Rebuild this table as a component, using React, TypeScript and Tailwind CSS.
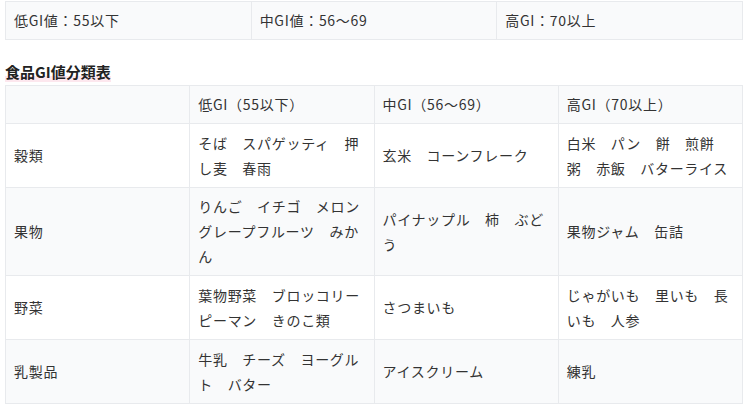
const ranges = ['低GI値：55以下', '中GI値：56〜69', '高GI：70以上'];

const head = ['', '低GI（55以下）', '中GI（56〜69）', '高GI（70以上）'];

const rows = [
  ['穀類', 'そば　スパゲッティ　押し麦　春雨', '玄米　コーンフレーク', '白米　パン　餅　煎餅　粥　赤飯　バターライス'],
  ['果物', 'りんご　イチゴ　メロン　グレープフルーツ　みかん', 'パイナップル　柿　ぶどう', '果物ジャム　缶詰'],
  ['野菜', '葉物野菜　ブロッコリー　ピーマン　きのこ類', 'さつまいも', 'じゃがいも　里いも　長いも　人参'],
  ['乳製品', '牛乳　チーズ　ヨーグルト　バター', 'アイスクリーム', '練乳'],
];

const cell = 'border border-[#e8eaed] px-[8px] py-[6px] align-middle text-left font-normal';

export default function App() {
  return (
    <div className="w-[743px] h-[408px] overflow-hidden bg-white pl-[5px] pt-[1px] text-[14px] leading-[25px] tracking-[0.05em] text-[#333] font-['Noto_Sans_CJK_JP','Noto_Sans',sans-serif]">
      <table className="w-[738px] table-fixed border-collapse">
        <tbody>
          <tr className="bg-[#f9fafb]">
            {ranges.map((r) => (
              <td key={r} className={cell}>
                {r}
              </td>
            ))}
          </tr>
        </tbody>
      </table>

      <h3 className="mt-[21px] h-[24px] text-[15px] leading-[22px] font-bold tracking-normal text-[#222]">
        <span className="bg-[linear-gradient(transparent_72%,#fde7ee_72%)]">食品GI値分類表</span>
      </h3>

      <table className="w-[738px] table-fixed border-collapse">
        <thead>
          <tr className="bg-[#f9fafb]">
            {head.map((h, i) => (
              <th key={i} className={cell}>
                {h}
              </th>
            ))}
          </tr>
        </thead>
        <tbody>
          {rows.map((row, i) => (
            <tr key={row[0]} className={i % 2 === 1 ? 'bg-[#f9fafb]' : 'bg-white'}>
              {row.map((c, j) => (
                <td key={j} className={cell + ' h-[64px]'}>
                  {c}
                </td>
              ))}
            </tr>
          ))}
        </tbody>
      </table>
    </div>
  );
}
